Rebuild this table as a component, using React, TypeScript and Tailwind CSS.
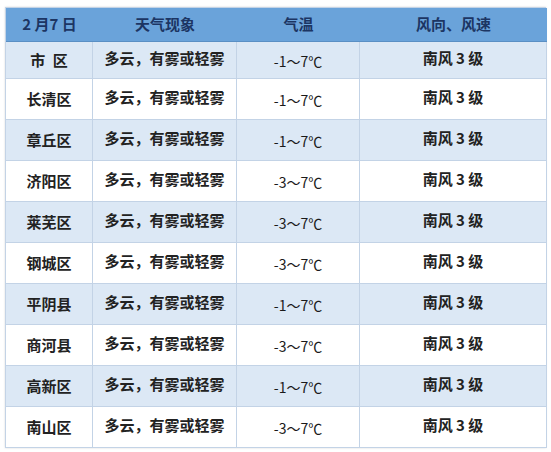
const rows: [string, string, string][] = [
  ["市\u2002区", "-1～7℃", "南风 3 级"],
  ["长清区", "-1～7℃", "南风 3 级"],
  ["章丘区", "-1～7℃", "南风 3 级"],
  ["济阳区", "-3～7℃", "南风 3 级"],
  ["莱芜区", "-3～7℃", "南风 3 级"],
  ["钢城区", "-3～7℃", "南风 3 级"],
  ["平阴县", "-1～7℃", "南风 3 级"],
  ["商河县", "-3～7℃", "南风 3 级"],
  ["高新区", "-1～7℃", "南风 3 级"],
  ["南山区", "-3～7℃", "南风 3 级"],
];

const cell = "flex items-center justify-center border-r border-b border-[#c3d3e6]";

export default function App() {
  return (
    <div
      className="w-[551px] h-[452px] bg-white pt-[7px] pl-[5px]"
      style={{ fontFamily: '"Noto Sans CJK SC", "Noto Sans", sans-serif' }}
    >
      <div className="w-[541px] grid grid-cols-[87px_144px_123px_187px] border-l border-t border-[#c3d3e6] shadow-[0_0_2px_rgba(0,0,0,0.15)]">
        {["2 月7 日", "天气现象", "气温", "风向、风速"].map((h) => (
          <div
            key={h}
            className="h-[34px] flex items-center justify-center bg-[#6aa3da] border-b border-[#5a8fc4] text-[15px] font-bold text-[#1c3563]"
          >
            {h}
          </div>
        ))}
        {rows.map(([area, temp, wind], i) => {
          const bg = i % 2 === 0 ? "bg-[#dce8f5]" : "bg-white";
          const h = i === 0 ? "h-[37px]" : "h-[41px]";
          return [
            <div key={area + "a"} className={`${cell} ${bg} ${h} text-[15px] font-bold text-[#222]`}>
              {area}
            </div>,
            <div key={area + "b"} className={`${cell} ${bg} ${h} text-[15px] font-bold text-[#222] pb-[3px]`}>
              多云，有雾或轻雾
            </div>,
            <div key={area + "c"} className={`${cell} ${bg} ${h} text-[14px] text-[#1a1a1a] pt-[3px]`}>
              {temp}
            </div>,
            <div key={area + "d"} className={`${cell} ${bg} ${h} text-[15px] font-bold text-[#222] pb-[3px]`}>
              {wind}
            </div>,
          ];
        })}
      </div>
    </div>
  );
}
